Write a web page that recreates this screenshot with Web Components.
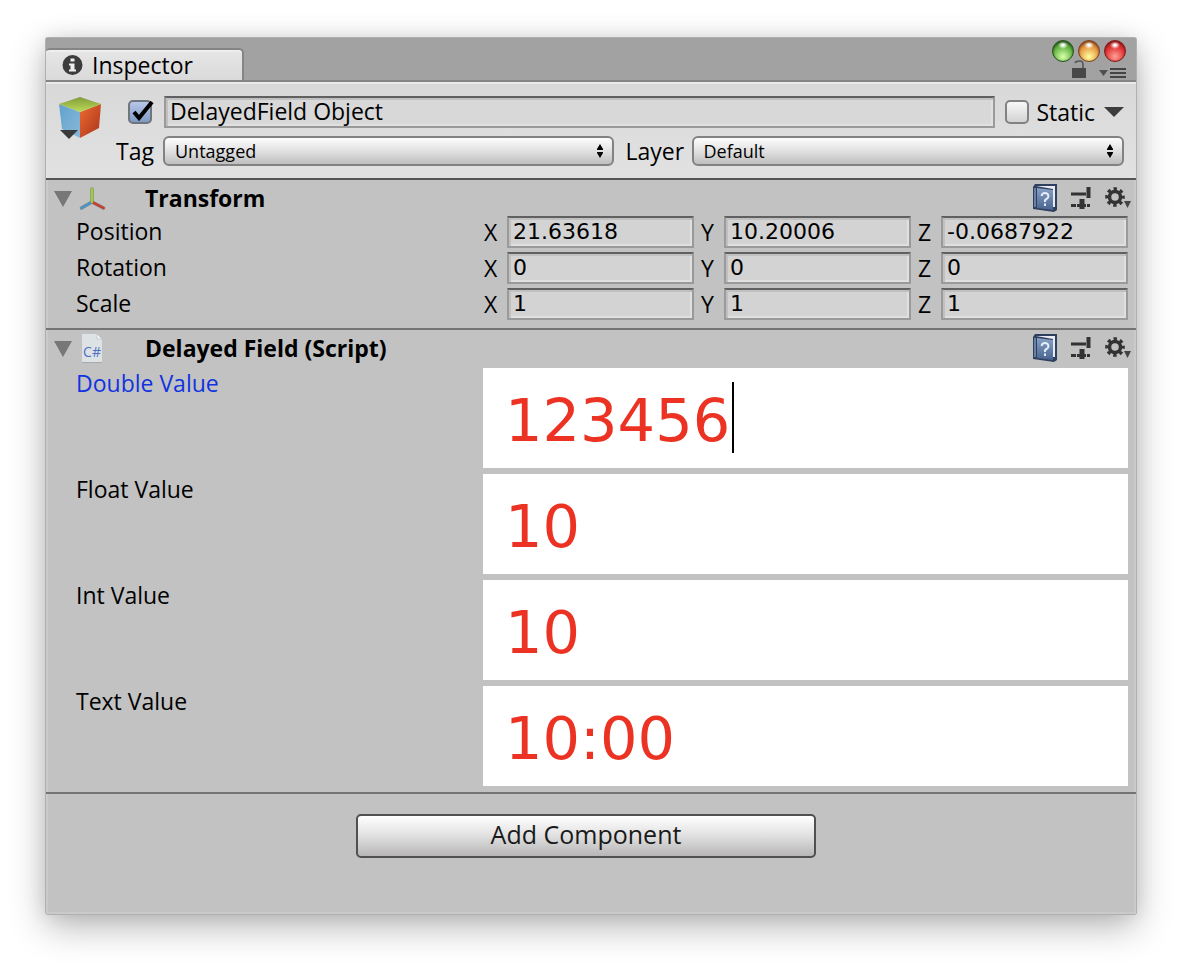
<!DOCTYPE html>
<html lang="en">
<head>
<meta charset="utf-8">
<title>Inspector</title>
<style>
  body {
    margin: 0;
    min-height: 100vh;
    box-sizing: border-box;
    padding: 38px 46px 54px;
    display: flex;
    background: #fff;
    color: #000;
    font: 23px/30px "Open Sans", "Noto Sans", sans-serif;
  }
</style>
</head>
<body>
<inspector-window>
  <title-bar slot="title"></title-bar>
  <object-header name="DelayedField Object"></object-header>
  <component-panel heading="Transform">
    <svg slot="icon" width="28" height="28" viewBox="0 0 28 28" fill="none" stroke-linecap="round" aria-hidden="true">
      <g stroke="#888" stroke-width="3.600"><path d="M13 18V5"/><path d="M13 18 2.500 24"/><path d="m13 18 11.500 6"/></g>
      <g stroke-width="2.400"><path d="M13 18 2.500 24" stroke="#4796c9"/><path d="m13 18 11.500 6" stroke="#cb3a2c"/><path d="M13 18V5" stroke="#9ad034"/></g>
    </svg>
    <vector-row label="Position" x="21.63618" y="10.20006" z="-0.0687922"></vector-row>
    <vector-row label="Rotation" x="0" y="0" z="0"></vector-row>
    <vector-row label="Scale" x="1" y="1" z="1"></vector-row>
  </component-panel>
  <component-panel heading="Delayed Field (Script)" class="tall">
    <svg slot="icon" width="28" height="30" viewBox="0 0 28 30" aria-hidden="true">
      <path d="M3 2h15l5 5v23H3z" fill="#aaa"/>
      <path d="M3 1h15l5 5v23H3z" fill="#dde2e5"/>
      <path d="M18 1v5h5z" fill="#f4f5f5" stroke="#bbb" stroke-width=".6"/>
      <text x="13" y="24" font-family="Open Sans, sans-serif" font-size="14" text-anchor="middle" fill="#4e70c8">C#</text>
    </svg>
    <value-row label="Double Value" value="123456" active></value-row>
    <value-row label="Float Value" value="10"></value-row>
    <value-row label="Int Value" value="10"></value-row>
    <value-row label="Text Value" value="10:00"></value-row>
  </component-panel>
  <add-component>Add Component</add-component>
</inspector-window>

<script>
const define = (name, render) => customElements.define(name, class extends HTMLElement {
  connectedCallback() {
    if (this.shadowRoot) return;
    this.attachShadow({ mode: 'open' }).innerHTML =
      '<style>*,:host{box-sizing:border-box}svg,::slotted(svg){display:block}button,input,select{font:inherit;color:inherit;margin:0}button{padding:0;border:0;background:none}</style>' + render(this);
  }
});

const FIELD = `
  .field {
    width: 100%; min-width: 0; height: 32px; padding: 0 4px 2px;
    border: 2px solid #9a9a9a; border-top-color: #606060; border-radius: 0;
    background: #d3d3d3; box-shadow: inset 2px 2px #c0c0c0, inset -2px -2px #e0e0e0; outline: 0;
  }`;

define('inspector-window', () => `
  <style>
    :host { display: flex; flex-direction: column; flex: 1; min-width: 0; background: #c2c2c2; border-radius: 2px;
      box-shadow: 0 0 0 1px #b0b0b0, 0 12px 36px rgba(0,0,0,.3), 0 0 20px rgba(0,0,0,.08); }
    main { flex: 1; box-shadow: inset 2px -2px #cacaca, inset -2px 0 #cacaca; }
  </style>
  <slot name="title"></slot><main><slot></slot></main>`);

define('title-bar', () => `
  <style>
    :host { display: flex; justify-content: space-between; height: 44px; padding-right: 10px; background: #a2a2a2; border-bottom: 2px solid #858585; }
    .tab { align-self: flex-end; display: flex; align-items: center; gap: 9px; width: 198px; height: 32px; padding: 0 16px;
      border: 2px solid #858585; border-width: 2px 2px 0 0; border-radius: 4px 5px 0 0; background: linear-gradient(#e6e6e6, #dadada); box-shadow: inset 0 2px #eee; }
    .side { padding-top: 2px; }
    .orbs { display: flex; gap: 4px; }
    .orb { width: 22px; height: 22px; border-radius: 50%; border: 1px solid var(--rim);
      background: radial-gradient(ellipse 5px 4px at 50% 20%, #fff 20%, transparent), radial-gradient(circle at 50% 78%, var(--glow), var(--mid) 55%, var(--rim)); box-shadow: inset 0 1px 2px var(--rim); }
    .green { --rim: #24521a; --mid: #65b643; --glow: #d9ffad; }
    .amber { --rim: #80401a; --mid: #e69a43; --glow: #ffffa0; }
    .red { --rim: #841717; --mid: #e03434; --glow: #ff9f96; }
    .tools { display: flex; justify-content: flex-end; gap: 12px; }
    svg { overflow: visible; }
  </style>
  <div class="tab">
    <svg width="21" height="21" viewBox="0 0 21 21" aria-hidden="true"><circle cx="10.500" cy="10" r="10" fill="#3c3c3c"/><path d="M8.500 3.500h4v3h-4zM7 8.500h5.500v6H14v2H7v-2h1.500v-4H7z" fill="#eee"/></svg>
    <span>Inspector</span>
  </div>
  <div class="side">
    <div class="orbs">
      <button class="orb green" aria-label="Zoom"></button><button class="orb amber" aria-label="Minimise"></button><button class="orb red" aria-label="Close"></button>
    </div>
    <div class="tools">
      <button aria-label="Lock"><svg width="15" height="16" viewBox="0 0 15 16"><path d="M1 6h14v10H1z" fill="#484848"/><path d="M12 6V2q0-3-3.500-3T4 1" fill="none" stroke="#555" stroke-width="1.600"/></svg></button>
      <button aria-label="Menu"><svg width="28" height="16" viewBox="0 0 28 16"><path d="M1 8h9l-4.500 6z" fill="#505050"/><path d="M12 7h16M12 11h16M12 15h16" stroke="#444" stroke-width="2"/></svg></button>
    </div>
  </div>`);

define('pop-up', el => `
  <style>
    :host { display: flex; flex: 1; align-items: center; min-width: 0; }
    label { flex: none; }
    .box { position: relative; flex: 1; min-width: 0; }
    select { display: block; appearance: none; width: 100%; height: 30px; padding: 0 24px 0 10px; border: 2px solid #828282; border-radius: 6px;
      background: linear-gradient(#fdfdfd, #dedede 55%, #bfbdbd); font-size: 18px; line-height: 24px; }
    svg { position: absolute; right: 10px; top: 8px; pointer-events: none; }
  </style>
  <label for="s" style="width:${el.getAttribute('label-width')}px">${el.getAttribute('label')}</label>
  <div class="box"><select id="s"><option>${el.getAttribute('value')}</option></select>
    <svg width="8" height="14" viewBox="0 0 8 14" aria-hidden="true"><path d="M4 0l3 5v1H1V5zM4 14l3-5V8H1v1z"/></svg></div>`);

define('object-header', el => `
  <style>
    :host { display: flex; gap: 14px; padding: 14px 12px 12px; background: linear-gradient(#d8d8d8, #e2e2e2);
      box-shadow: inset 0 2px #eaeaea; border-bottom: 2px solid #555; }
    .rows { flex: 1; min-width: 0; display: flex; flex-direction: column; gap: 8px; }
    .row { display: flex; align-items: center; }
    .name { padding-left: 12px; }
    .cube { align-self: flex-start; }
    ${FIELD}
    .field { flex: 1; background: #d8d8d8; }
    .tick { position: relative; display: block; width: 24px; height: 24px; }
    .tick input { display: block; appearance: none; width: 24px; height: 24px; border: 2px solid #828282; border-radius: 5px; background: linear-gradient(#f8f8f8, #d4d2d2); }
    .tick input:checked { background: linear-gradient(#b7c8e8, #8099c6); border-color: #70747c; }
    .tick svg { position: absolute; left: 4px; top: 1px; pointer-events: none; }
    .tick input:not(:checked) + svg { display: none; }
    .active { margin-right: 12px; }
    .still { margin: 0 7px 0 10px; }
    .drop { margin: 0 0 0 9px; }
    .popups { gap: 12px; }
    pop-up:first-child { flex: 497; }
    pop-up:last-child { flex: 498; }
  </style>
  <button class="cube" aria-label="Object icon">
    <svg width="44" height="44" viewBox="0 0 44 44">
      <defs>
        <linearGradient id="t" x2="0" y2="1"><stop stop-color="#809c3c"/><stop offset="1" stop-color="#bddb58"/></linearGradient>
        <linearGradient id="l" x2="1" y2="1"><stop stop-color="#60a2cd"/><stop offset="1" stop-color="#8ab8d9"/></linearGradient>
        <linearGradient id="r" x2="1" y2="1"><stop stop-color="#ed6a32"/><stop offset="1" stop-color="#a9341a"/></linearGradient>
      </defs>
      <path d="M1 8 22 16v26L4 33z" fill="url(#l)"/><path d="M43 8 22 16v26l19-10z" fill="url(#r)"/><path d="M22 1 43 8 22 16 1 8z" fill="url(#t)"/>
      <path d="M2 34h18l-9 9z" fill="#3a3a3a"/>
    </svg>
  </button>
  <div class="rows">
    <div class="row name">
      <span class="tick active"><input type="checkbox" checked aria-label="Active"><svg width="22" height="20" viewBox="0 0 22 20"><path d="m2 11 5 6L20 1" fill="none" stroke="#000" stroke-width="4"/></svg></span>
      <input class="field" aria-label="Name" value="${el.getAttribute('name')}">
      <span class="tick still"><input type="checkbox" id="static"><svg width="22" height="20" viewBox="0 0 22 20"><path d="m2 11 5 6L20 1" fill="none" stroke="#000" stroke-width="4"/></svg></span>
      <label for="static">Static</label>
      <button class="drop" aria-label="Static options"><svg width="20" height="12" viewBox="0 0 20 12"><path d="M0 1h20l-10 10z" fill="#3c3c3c"/></svg></button>
    </div>
    <div class="row popups">
      <pop-up label="Tag" label-width="47" value="Untagged"></pop-up>
      <pop-up label="Layer" label-width="66" value="Default"></pop-up>
    </div>
  </div>`);

define('component-panel', el => `
  <style>
    :host { display: block; padding-bottom: 8px; border-bottom: 2px solid #747474; }
    :host(.tall) { padding-bottom: 6px; }
    header { display: flex; align-items: center; height: 36px; padding: 0 4px 0 8px; }
    :host(.tall) .rows { padding-top: 2px; gap: 6px; }
    .icon { display: block; width: 28px; margin: 0 38px 0 7px; }
    h2 { margin: 0; flex: 1; font-size: 23px; line-height: 30px; font-weight: 700; }
    .rows { display: flex; flex-direction: column; gap: 4px; padding-left: 30px; padding-right: 8px; }
    .tools { display: flex; align-items: center; gap: 12px; }
  </style>
  <header>
    <button aria-label="Collapse"><svg width="18" height="18" viewBox="0 0 18 18"><path d="M0 2h18L9 18z" fill="#777"/></svg></button>
    <span class="icon"><slot name="icon"></slot></span>
    <h2>${el.getAttribute('heading')}</h2>
    <div class="tools">
      <button aria-label="Help"><svg width="26" height="28" viewBox="0 0 26 28">
        <defs><linearGradient id="b" x2="0" y2="1"><stop stop-color="#87a0c6"/><stop offset="1" stop-color="#48648f"/></linearGradient></defs>
        <path d="M3 0h22v26l-3 2-21-3V3z" fill="#2f3f5e"/><path d="M4 2h19v21h-2V5z" fill="#e8ecf2"/><path d="M5 4l16 2v20L5 24z" fill="url(#b)"/><path d="M3 4v19" stroke="#7f97bb" stroke-width="1.500"/>
        <path d="M9.500 12q.5-3 3.500-3t3.500 3q0 2-2 3t-1.500 3M13 19.500v2.500" fill="none" stroke="#e4edf8" stroke-width="2"/></svg></button>
      <button aria-label="Presets"><svg width="22" height="24" viewBox="0 0 22 24" fill="none" stroke="#333"><path d="M1 8h15M1 19.500h5M17 19.500h3" stroke-width="3"/><path d="M18.500 1v11" stroke-width="4"/><path d="M12 13v10" stroke-width="5"/><path d="M7 19.500h9" stroke-width="3"/></svg></button>
      <button aria-label="Settings"><svg width="28" height="26" viewBox="0 0 28 26"><circle cx="11" cy="12" r="5.500" fill="none" stroke="#333" stroke-width="3.500"/><circle cx="11" cy="12" r="8" fill="none" stroke="#333" stroke-width="3.600" stroke-dasharray="3.300 2.983" stroke-dashoffset="1.650"/><path d="M20 16h7l-3.500 7z" fill="#444"/></svg></button>
    </div>
  </header>
  <div class="rows"><slot></slot></div>`);

define('vector-row', el => `
  <style>
    :host { display: grid; grid-template-columns: 407fr 645fr; }
    .axes { display: grid; grid-template-columns: repeat(3, 1fr); gap: 6px; }
    label { display: flex; align-items: center; }
    .axis { flex: none; width: 24px; padding-left: 1px; line-height: 32px; height: 32px; }
    .title { line-height: 30px; }
    ${FIELD}
    .field { font-family: "DejaVu Sans", sans-serif; font-size: 22px; }
  </style>
  <span class="title">${el.getAttribute('label')}</span>
  <div class="axes">${['x', 'y', 'z'].map(a => `<label><span class="axis">${a.toUpperCase()}</span><input class="field" value="${el.getAttribute(a)}"></label>`).join('')}</div>`);

define('value-row', el => `
  <style>
    :host { display: grid; grid-template-columns: 407fr 645fr; }
    :host([active]) label { color: #1133e0; }
    .box { position: relative; font: 59px/72px "DejaVu Sans", sans-serif; }
    input { display: block; width: 100%; height: 100px; padding: 4px 22px 0; border: 0; border-radius: 0; background: #fff; color: #ec3323; outline: 0; }
    .caret { position: absolute; left: calc(24px + 6ch); top: 14px; width: 2px; height: 71px; background: #000; }
  </style>
  <label for="v">${el.getAttribute('label')}</label>
  <div class="box"><input id="v" value="${el.getAttribute('value')}">${el.hasAttribute('active') ? '<span class="caret"></span>' : ''}</div>`);

define('add-component', () => `
  <style>
    :host { display: flex; justify-content: center; padding: 20px 10px 40px 0; }
    button { width: 460px; max-width: 100%; height: 44px; border: 2px solid #505050; border-radius: 5px; padding-bottom: 4px;
      background: linear-gradient(#fff, #e0e0e0 50%, #b8b6b6); font-size: 25px; line-height: 32px; color: #1a1a1a; }
  </style>
  <button><slot></slot></button>`);
</script>
</body>
</html>
